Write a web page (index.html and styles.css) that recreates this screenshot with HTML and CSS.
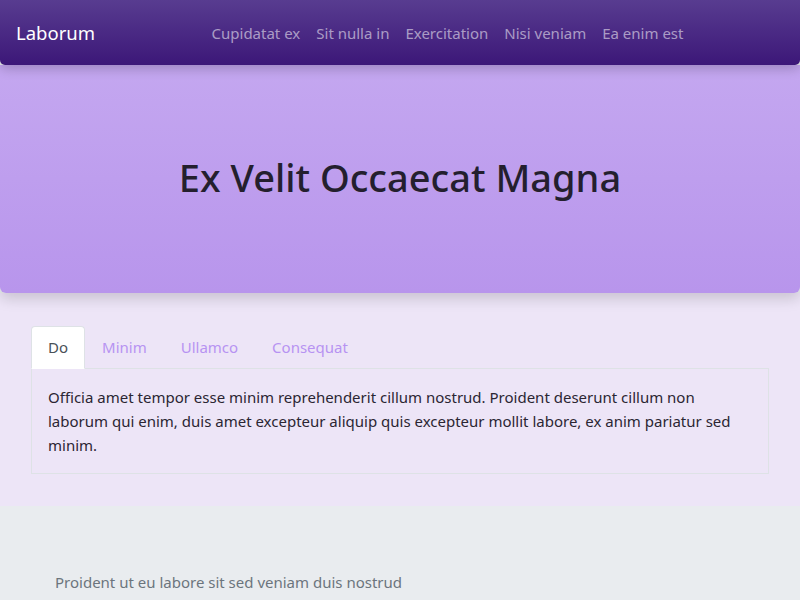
FILE: index.html
```html
<!DOCTYPE html>
<html lang="en">
<head>
<meta charset="utf-8">
<title>Laborum</title>
<link rel="stylesheet" href="styles.css">
</head>
<body>
<nav class="navbar">
  <a class="brand" href="#">Laborum</a>
  <ul class="nav-links">
    <li><a href="#">Cupidatat ex</a></li>
    <li><a href="#">Sit nulla in</a></li>
    <li><a href="#">Exercitation</a></li>
    <li><a href="#">Nisi veniam</a></li>
    <li><a href="#">Ea enim est</a></li>
  </ul>
</nav>
<header class="hero">
  <h1>Ex Velit Occaecat Magna</h1>
</header>
<section class="tabs-section">
  <ul class="tabs">
    <li class="tab active">Do</li>
    <li class="tab">Minim</li>
    <li class="tab">Ullamco</li>
    <li class="tab">Consequat</li>
  </ul>
  <div class="tab-content">
    <p>Officia amet tempor esse minim reprehenderit cillum nostrud. Proident deserunt cillum non laborum qui enim, duis amet excepteur aliquip quis excepteur mollit labore, ex anim pariatur sed minim.</p>
  </div>
</section>
<footer class="footer">
  <p>Proident ut eu labore sit sed veniam duis nostrud</p>
</footer>
</body>
</html>
```
FILE: styles.css
```css
* { box-sizing: border-box; }
html, body { margin: 0; padding: 0; }
body {
  font-family: "Noto Sans", "Open Sans", sans-serif;
  font-size: 15px;
  line-height: 24px;
  color: #212529;
  background: #e9ecef;
  overflow: hidden;
}
.navbar {
  position: relative;
  z-index: 2;
  height: 65px;
  display: flex;
  align-items: center;
  padding: 0 16px;
  background: linear-gradient(#583c90, #3c1778);
  border-radius: 0 0 5px 5px;
  box-shadow: 0 4px 12px rgba(0,0,0,0.2);
}
.brand {
  color: #fff;
  font-size: 18.5px;
  line-height: 30px;
  text-decoration: none;
  margin-right: 16px;
}
.nav-links {
  list-style: none;
  margin: 0 auto;
  padding: 0;
  display: flex;
}
.nav-links a {
  display: block;
  padding: 8px;
  color: rgba(255,255,255,0.55);
  text-decoration: none;
}
.hero {
  position: relative;
  z-index: 1;
  height: 228px;
  display: flex;
  align-items: center;
  justify-content: center;
  background: linear-gradient(#c4a7f0, #b895ec);
  border-radius: 0 0 6px 6px;
  box-shadow: 0 6px 14px rgba(0,0,0,0.15);
}
.hero h1 {
  margin: 0;
  font-size: 38px;
  line-height: 48px;
  font-weight: 500;
  color: #241f2e;
  transform: translateY(-2px);
}
.tabs-section {
  background: #ede5f7;
  padding: 33px 31px 32px;
}
.tabs {
  list-style: none;
  margin: 0;
  padding: 0;
  display: flex;
  border-bottom: 1px solid #dee2e6;
}
.tab {
  padding: 8px 16px 9px;
  color: #b793f2;
  border: 1px solid transparent;
  border-radius: 4px 4px 0 0;
  margin-bottom: -1px;
}
.tab.active {
  background: #fff;
  color: #495057;
  border-color: #dee2e6 #dee2e6 #fff;
}
.tab-content {
  border: 1px solid #dee2e6;
  border-top: none;
  padding: 16px;
}
.tab-content p { margin: 0; color: #2b2633; }
.footer {
  padding: 64px 55px 40px;
}
.footer p { margin: 0; color: #6c757d; }
```
